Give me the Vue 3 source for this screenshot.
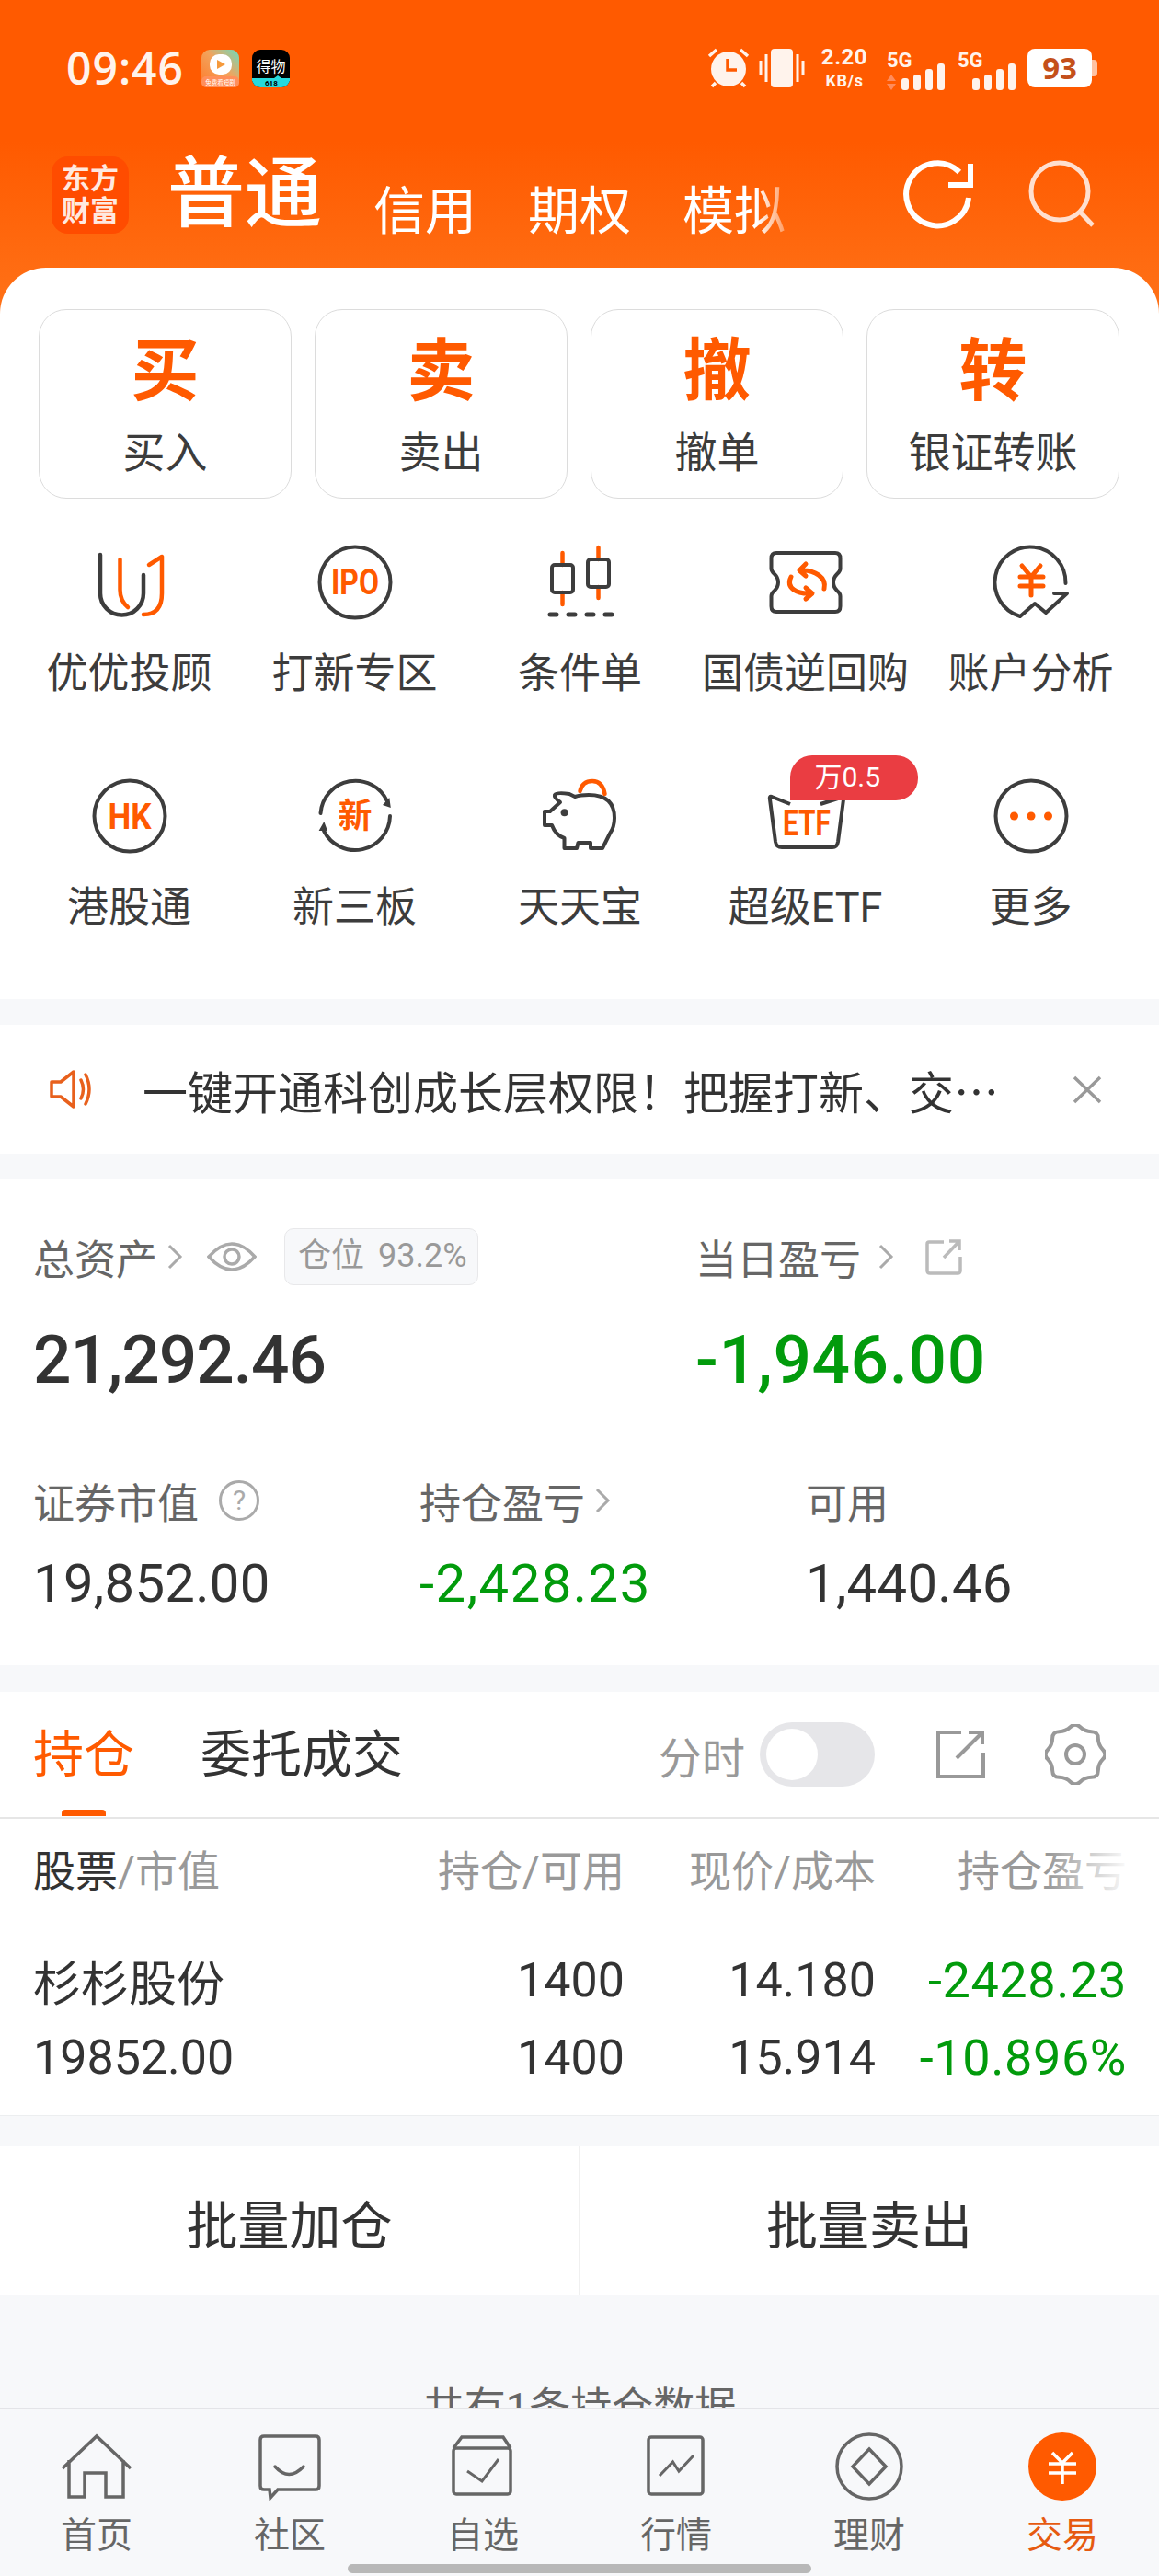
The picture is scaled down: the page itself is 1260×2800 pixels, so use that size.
<template>
  <div class="app">
    <div class="main">
      <header class="hero">
        <div class="status">
          <span class="time">09:46</span>
          <svg class="app-icon first" viewBox="0 0 41 41">
            <defs>
              <linearGradient id="shortPlay" x1="0" y1="1" x2="1" y2="0">
                <stop offset="0" stop-color="#ff7a2a" />
                <stop offset="0.55" stop-color="#f2a35c" />
                <stop offset="1" stop-color="#6fdcbc" />
              </linearGradient>
            </defs>
            <rect width="41" height="41" rx="9" fill="url(#shortPlay)" />
            <rect y="29" width="41" height="12" rx="5" fill="#ff8f5a" />
            <rect x="9" y="5" width="24" height="22" rx="10" fill="#fff" />
            <path d="M17 11 L26 16 L17 21Z" fill="#f59a3c" />
            <text x="20.5" y="37.5" text-anchor="middle" class="tiny">免费看短剧</text>
          </svg>
          <svg class="app-icon" viewBox="0 0 41 41">
            <rect width="41" height="41" rx="9" fill="#000" />
            <path d="M0 32 H41 V32 A9 9 0 0 1 32 41 H9 A9 9 0 0 1 0 32Z M0 31 H24 L28 28 L32 31 H41 V34 H0Z" fill="#26d9dd" />
            <text x="20.5" y="24" text-anchor="middle" class="dewu">得物</text>
            <text x="14" y="39" class="tiny-dark">618</text>
          </svg>

          <svg class="alarm" viewBox="0 0 46 46">
            <circle cx="23" cy="24" r="19" fill="#fff3ec" />
            <path d="M2 10 L10 3 M36 3 L44 10 M5 43 L9 39 M41 43 L37 39" stroke="#fff3ec" stroke-width="3.5" fill="none" />
            <path d="M22 13 V25 H32" stroke="#ff5a00" stroke-width="3.5" fill="none" />
          </svg>
          <svg class="vibrate" viewBox="0 0 50 44">
            <rect x="13" y="1" width="24" height="42" rx="4" fill="#fff3ec" />
            <path d="M2 14 V30 M8 7 V37 M42 7 V37 M48 14 V30" stroke="#fff3ec" stroke-width="3" fill="none" />
          </svg>
          <div class="speed">
            <span class="speed-num">2.20</span>
            <span class="speed-unit">KB/s</span>
          </div>
          <svg class="signal" viewBox="0 -6 63 50">
            <text x="0" y="18" class="five-g">5G</text>
            <path d="M5 26 L10 33 H0Z M0 36 H10 L5 43Z" fill="#ff8c5c" />
            <rect x="16" y="30" width="8" height="13" rx="3" fill="#fff3ec" />
            <rect x="29" y="26" width="8" height="17" rx="3" fill="#fff3ec" />
            <rect x="42" y="20" width="8" height="23" rx="3" fill="#fff3ec" />
            <rect x="55" y="14" width="8" height="29" rx="3" fill="#fff3ec" />
          </svg>
          <svg class="signal second" viewBox="0 -6 63 50">
            <text x="0" y="18" class="five-g">5G</text>
            <rect x="16" y="30" width="8" height="13" rx="3" fill="#fff3ec" />
            <rect x="29" y="26" width="8" height="17" rx="3" fill="#fff3ec" />
            <rect x="42" y="20" width="8" height="23" rx="3" fill="#fff3ec" />
            <rect x="55" y="14" width="8" height="29" rx="3" fill="#fff3ec" />
          </svg>
          <div class="battery"><span>93</span></div>
        </div>

        <div class="titlebar">
          <div class="logo">东方<br>财富</div>
          <span class="tab-main">普通</span>
          <div class="tabs">
            <span>信用</span>
            <span>期权</span>
            <span>模拟</span>
          </div>
          <div class="title-actions">
            <svg width="80" height="80" viewBox="0 0 80 80" fill="none" stroke="#fff" stroke-width="6">
              <path d="M72 43 A34 34 0 1 1 62 15" />
              <path d="M74 6 V29 H50" />
            </svg>
            <svg width="80" height="80" viewBox="0 0 80 80" fill="none" stroke="#ffdfcf" stroke-width="5">
              <circle cx="37" cy="36" r="31" />
              <path d="M59 58 L73 73" />
            </svg>
          </div>
        </div>
      </header>

      <section class="card">
        <div class="actions">
          <div v-for="a in actions" :key="a.big" class="action">
            <span class="action-big">{{ a.big }}</span>
            <span class="action-label">{{ a.label }}</span>
          </div>
        </div>

        <div class="grid">
          <div class="cell">
            <svg class="g-icon" viewBox="0 0 100 100" fill="none" stroke-width="4.5" stroke-linecap="round" stroke-linejoin="round">
              <path d="M18 20 V62 A23.5 23.5 0 0 0 65 62 V42" stroke="#3d3d3d" />
              <path d="M39.5 25 V58 Q39.5 70 48 77" stroke="#ff5a00" />
              <path d="M71 31 L85 22 V62 Q85 85 65 85" stroke="#ff5a00" />
            </svg>
            <span class="cell-label">优优投顾</span>
          </div>
          <div class="cell">
            <svg class="g-icon" viewBox="0 0 100 100" fill="none">
              <circle cx="50" cy="50" r="38.5" stroke="#3d3d3d" stroke-width="4" />
              <text x="50" y="63" text-anchor="middle" textLength="52" lengthAdjust="spacingAndGlyphs" class="g-text">IPO</text>
            </svg>
            <span class="cell-label">打新专区</span>
          </div>
          <div class="cell">
            <svg class="g-icon" viewBox="0 0 100 100" fill="none" stroke-linecap="round">
              <path d="M30.5 18 V31 M30.5 61 V74 M69.5 12 V25 M69.5 55 V67" stroke="#ff5a00" stroke-width="4.5" />
              <rect x="19" y="31" width="23" height="30" rx="3" stroke="#3d3d3d" stroke-width="4" />
              <rect x="58" y="25" width="23" height="30" rx="3" stroke="#3d3d3d" stroke-width="4" />
              <path d="M17 85 H24 M37 85 H44 M57 85 H64 M77 85 H84" stroke="#3d3d3d" stroke-width="5" />
            </svg>
            <span class="cell-label">条件单</span>
          </div>
          <div class="cell">
            <svg class="g-icon" viewBox="0 0 100 100" fill="none" stroke-linecap="round" stroke-linejoin="round">
              <path d="M18 18 H82 Q87.5 18 87.5 24 V35 Q87.5 38 84 41 Q80 45 80 50 Q80 55 84 59 Q87.5 62 87.5 65 V76 Q87.5 82 82 82 H18 Q12.5 82 12.5 76 V65 Q12.5 62 16 59 Q20 55 20 50 Q20 45 16 41 Q12.5 38 12.5 35 V24 Q12.5 18 18 18Z" stroke="#3d3d3d" stroke-width="4" />
              <path d="M70 57 C73 45 60 36 44 37 M50 30 L43 37 L50 43 M34 44 C28 56 40 63 56 62 M50 56 L57 62 L50 68" stroke="#ff5a00" stroke-width="5" />
            </svg>
            <span class="cell-label">国债逆回购</span>
          </div>
          <div class="cell">
            <svg class="g-icon" viewBox="0 0 100 100" fill="none" stroke-linecap="round" stroke-linejoin="round">
              <path d="M87.5 51 A38.5 38.5 0 1 0 38 87 L54 73 L66 83 L89 62 H75" stroke="#3d3d3d" stroke-width="4" />
              <path d="M40 32 L50 44 L60 32 M38 44 H63 M38 54 H63 M50 44 V64" stroke="#ff5a00" stroke-width="5" />
            </svg>
            <span class="cell-label">账户分析</span>
          </div>

          <div class="cell">
            <svg class="g-icon" viewBox="0 0 100 100" fill="none">
              <circle cx="50" cy="50" r="38.5" stroke="#3d3d3d" stroke-width="4" />
              <text x="50" y="64" text-anchor="middle" textLength="47" lengthAdjust="spacingAndGlyphs" class="g-text">HK</text>
            </svg>
            <span class="cell-label">港股通</span>
          </div>
          <div class="cell">
            <svg class="g-icon" viewBox="0 0 100 100" fill="none">
              <path d="M12.5 47 A38 38 0 0 1 85 34 M88 50 A38 38 0 0 1 16 66" stroke="#3d3d3d" stroke-width="4" stroke-linecap="round" />
              <path d="M87.3 30 L88.8 41 L80 38Z M10.6 66 L16.3 56 L20 66Z" fill="#3d3d3d" />
              <text x="50" y="63" text-anchor="middle" class="g-cjk">新</text>
            </svg>
            <span class="cell-label">新三板</span>
          </div>
          <div class="cell">
            <svg class="g-icon" viewBox="0 0 100 100" fill="none" stroke-linejoin="round">
              <path d="M49.5 23 Q52 12 63 12 Q74 12 76.5 26" stroke="#ff5a00" stroke-width="4.5" stroke-linecap="round" />
              <path d="M22 27 Q24 24 38 26 L44 29 Q50 27 59 27 Q87 27 87 52 Q87 62 82 69 L74 85 H61 V79 H47.5 L46 85 H32.5 V74 Q23 71 19 60 H11 V45 H17 L28 35 Q21 30 22 27Z" stroke="#3d3d3d" stroke-width="4" />
              <circle cx="32.6" cy="46.3" r="4" fill="#3d3d3d" />
            </svg>
            <span class="cell-label">天天宝</span>
          </div>
          <div class="cell">
            <div class="icon-wrap">
              <svg class="g-icon" viewBox="0 0 100 100" fill="none" stroke-linejoin="round">
                <path d="M33 37 L13 29 Q10 28 11 32 L17 78 Q18 84 24 84 H79 Q84 84 85 78 L91 32 Q91 28 88 30 L66 37" stroke="#3d3d3d" stroke-width="4" />
                <text x="51" y="71" text-anchor="middle" textLength="52" lengthAdjust="spacingAndGlyphs" class="g-text">ETF</text>
              </svg>
              <span class="badge">万0.5</span>
            </div>
            <span class="cell-label">超级ETF</span>
          </div>
          <div class="cell">
            <svg class="g-icon" viewBox="0 0 100 100" fill="none">
              <circle cx="50" cy="50" r="38.5" stroke="#3d3d3d" stroke-width="4" />
              <circle cx="31.5" cy="50" r="4.5" fill="#ff5a00" />
              <circle cx="50" cy="50" r="4.5" fill="#ff5a00" />
              <circle cx="68.5" cy="50" r="4.5" fill="#ff5a00" />
            </svg>
            <span class="cell-label">更多</span>
          </div>
        </div>
      </section>

      <section class="notice">
        <svg class="speaker" width="46" height="42" viewBox="0 0 46 42" fill="none" stroke="#e8601c" stroke-width="3.5" stroke-linejoin="round">
          <path d="M2 13 H12 L26 2 V40 L12 29 H2Z" />
          <path d="M34 11 Q39 21 34 31 M39 5 Q47 21 39 37" stroke-linecap="round" />
        </svg>
        <span class="notice-text">一键开通科创成长层权限！把握打新、交…</span>
        <svg class="close" width="32" height="32" viewBox="0 0 32 32" stroke="#999" stroke-width="3.5" fill="none">
          <path d="M2 3 L30 30 M30 3 L2 30" />
        </svg>
      </section>

      <section class="assets">
        <div class="assets-top">
          <div class="asset-main">
            <div class="label-row">
              <span>总资产</span>
              <svg class="chev" viewBox="0 0 18 30"><path d="M3 3 L15 15 L3 27" /></svg>
              <svg class="eye" width="54" height="38" viewBox="0 0 54 38" fill="none" stroke="#aaa" stroke-width="3.5">
                <path d="M2 19 Q27 -9 52 19 Q27 47 2 19Z" />
                <circle cx="27" cy="19" r="8" />
              </svg>
              <span class="pill">仓位 <i>93.2%</i></span>
            </div>
            <div class="big">21,292.46</div>
          </div>
          <div class="asset-day">
            <div class="label-row">
              <span>当日盈亏</span>
              <svg class="chev wide" viewBox="0 0 18 30"><path d="M3 3 L15 15 L3 27" /></svg>
              <svg class="ext" width="40" height="40" viewBox="0 0 40 40" fill="none" stroke="#bbb" stroke-width="3.5">
                <path d="M20 4 H4 Q2 4 2 6 V35 Q2 38 5 38 H35 Q38 38 38 35 V20" />
                <path d="M20 21 L37 3 M26 3 H37 V13" />
              </svg>
            </div>
            <div class="big green">-1,946.00</div>
          </div>
        </div>

        <div class="assets-sub">
          <div>
            <div class="label-row">
              <span>证券市值</span>
              <span class="help">?</span>
            </div>
            <div class="val">19,852.00</div>
          </div>
          <div>
            <div class="label-row">
              <span>持仓盈亏</span>
              <svg class="chev" viewBox="0 0 18 30"><path d="M3 3 L15 15 L3 27" /></svg>
            </div>
            <div class="val green">-2,428.23</div>
          </div>
          <div>
            <div class="label-row"><span>可用</span></div>
            <div class="val">1,440.46</div>
          </div>
        </div>
      </section>

      <section class="positions">
        <div class="pos-tabs">
          <span class="pos-tab active">持仓</span>
          <span class="pos-tab">委托成交</span>
          <div class="pos-tools">
            <span class="fen">分时</span>
            <span class="toggle"><i></i></span>
            <svg class="share" width="54" height="54" viewBox="0 0 54 54" fill="none" stroke="#999" stroke-width="4">
              <path d="M28 3 H3 V51 H52 V25" />
              <path d="M23 31 L51 3 M36 3 H51 V16" />
            </svg>
            <svg width="66" height="66" viewBox="0 0 66 66" fill="none" stroke="#999" stroke-width="4">
              <path :d="gearPath" />
              <circle cx="33" cy="33" r="10" />
            </svg>
          </div>
        </div>

        <div class="pos-head pos-grid">
          <span class="pos-name"><b>股票</b>/市值</span>
          <span>持仓/可用</span>
          <span>现价/成本</span>
          <span class="fade-cell">持仓盈亏</span>
        </div>

        <div class="pos-body">
          <div class="pos-grid pos-row">
            <span class="pos-name">杉杉股份</span>
            <span>1400</span>
            <span>14.180</span>
            <span class="green">-2428.23</span>
          </div>
          <div class="pos-grid pos-row">
            <span class="pos-name">19852.00</span>
            <span>1400</span>
            <span>15.914</span>
            <span class="green">-10.896%</span>
          </div>
        </div>
      </section>

      <div class="batch">
        <span>批量加仓</span>
        <span>批量卖出</span>
      </div>

      <div class="count">共有1条持仓数据</div>
    </div>

    <nav class="nav">
      <div class="nav-item">
        <svg viewBox="0 0 90 90" fill="none" stroke="#666" stroke-width="3.5">
          <path d="M8 47 L45 12 L82 47 M15 38 V78 H32 V52 H55 V78 H74 V38" />
        </svg>
        <span>首页</span>
      </div>
      <div class="nav-item">
        <svg viewBox="0 0 90 90" fill="none" stroke="#666" stroke-width="3.5">
          <path d="M17 12 H73 Q77 12 77 16 V66 Q77 70 73 70 H32 L24 79 L23 70 H17 Q13 70 13 66 V16 Q13 12 17 12Z" />
          <path d="M29 45 Q44 62 60 45" stroke-linecap="round" />
        </svg>
        <span>社区</span>
      </div>
      <div class="nav-item">
        <svg viewBox="0 0 90 90" fill="none" stroke="#666" stroke-width="3.5">
          <path d="M13 25 L22 13 H67 L75 25" />
          <rect x="13" y="25" width="62" height="50" rx="3" />
          <path d="M28 50 L44 61 L62 37" stroke-width="3" />
        </svg>
        <span>自选</span>
      </div>
      <div class="nav-item">
        <svg viewBox="0 0 90 90" fill="none" stroke="#666" stroke-width="3.5">
          <rect x="15" y="13" width="59" height="62" rx="3" />
          <path d="M27 55 L41.5 40 L48 50 L64 33" stroke-width="3" />
        </svg>
        <span>行情</span>
      </div>
      <div class="nav-item">
        <svg viewBox="0 0 90 90" fill="none" stroke="#666" stroke-width="3.5">
          <circle cx="45" cy="45" r="35" />
          <path d="M45 26 L63 45 L45 64 L27 45Z" />
        </svg>
        <span>理财</span>
      </div>
      <div class="nav-item active">
        <svg viewBox="0 0 90 90" fill="none">
          <circle cx="45" cy="45" r="37" fill="#ff5a00" />
          <path d="M34 30 L45 41 L56 30 M30 42 H60 M30 52 H60 M45 41 V64" stroke="#fff" stroke-width="3.5" />
        </svg>
        <span>交易</span>
      </div>
      <i class="home-bar"></i>
    </nav>
  </div>
</template>

<script setup>
const actions = [
  { big: '买', label: '买入' },
  { big: '卖', label: '卖出' },
  { big: '撤', label: '撤单' },
  { big: '转', label: '银证转账' }
]

// wavy eight-tooth outline for the settings gear
const gearPts = []
for (let i = 0; i < 16; i++) {
  const r = i % 2 ? 27 : 35
  const a = (Math.PI / 8) * i - Math.PI / 2
  gearPts.push([33 + r * Math.cos(a), 33 + r * Math.sin(a)])
}
const mid = (p, q) => [(p[0] + q[0]) / 2, (p[1] + q[1]) / 2]
const start = mid(gearPts[15], gearPts[0])
let gearPath = `M${start[0]} ${start[1]}`
gearPts.forEach((p, i) => {
  const m = mid(p, gearPts[(i + 1) % 16])
  gearPath += ` Q${p[0]} ${p[1]} ${m[0]} ${m[1]}`
})
gearPath += 'Z'
</script>

<style scoped>
.app {
  width: 1260px;
  height: 2800px;
  display: flex;
  flex-direction: column;
  overflow: hidden;
  background: #f7f8fa;
  color: #333;
  font-family: Roboto, "Noto Sans CJK SC", sans-serif;
}

.main {
  flex: 1;
  min-height: 0;
  overflow: hidden;
}

.hero {
  height: 341px;
  box-sizing: border-box;
  padding-top: 52px;
  background: linear-gradient(180deg, #ff5a00 0%, #ff5a00 45%, #ff7218 100%);
}

.status {
  display: flex;
  align-items: center;
  height: 44px;
  padding-left: 72px;
  color: #fff3ec;
}

.time {
  width: 147px;
  font-family: "Open Sans", sans-serif;
  font-size: 48px;
  font-weight: 600;
  line-height: 44px;
  letter-spacing: 1px;
}

.app-icon {
  width: 41px;
  height: 41px;
  margin-right: 14px;
}

.tiny {
  font-family: "Noto Sans CJK SC", sans-serif;
  font-size: 6.5px;
  fill: #fff;
}

.tiny-dark {
  font-family: Roboto, sans-serif;
  font-size: 8px;
  font-weight: 700;
  fill: #000;
}

.dewu {
  font-family: "Noto Sans CJK SC", sans-serif;
  font-size: 16px;
  fill: #fff;
}

.alarm {
  width: 46px;
  height: 46px;
  margin-left: 440px;
}

.vibrate {
  width: 50px;
  height: 44px;
  margin-left: 10px;
}

.speed {
  display: flex;
  flex-direction: column;
  align-items: center;
  width: 54px;
  margin-left: 16px;
  font-family: Roboto, sans-serif;
  font-weight: 700;
}

.speed-num {
  font-size: 24px;
  line-height: 27px;
  letter-spacing: 0.5px;
}

.speed-unit {
  font-size: 18px;
  line-height: 23px;
  letter-spacing: 0.5px;
}

.signal {
  width: 63px;
  height: 50px;
  margin-left: 19px;
}

.signal.second {
  margin-left: 14px;
}

.five-g {
  font-family: Roboto, sans-serif;
  font-size: 22px;
  font-weight: 700;
  fill: #fff3ec;
}

.battery {
  position: relative;
  width: 70px;
  height: 42px;
  margin-left: 13px;
  border-radius: 8px;
  background: #fff;
  display: flex;
  align-items: center;
  justify-content: center;
}

.battery::after {
  content: "";
  position: absolute;
  right: -6px;
  top: 12px;
  width: 6px;
  height: 18px;
  border-radius: 0 4px 4px 0;
  background: #ffc2a2;
}

.battery span {
  font-family: "Open Sans", sans-serif;
  font-size: 33px;
  font-weight: 700;
  line-height: 42px;
  color: #c4501a;
}

.titlebar {
  display: flex;
  align-items: flex-end;
  height: 84px;
  margin-top: 74px;
  padding: 0 65px 0 56px;
  color: #fff;
}

.logo {
  width: 84px;
  height: 84px;
  box-sizing: border-box;
  padding-top: 7px;
  border-radius: 18px;
  background: #ff4c00;
  color: #ffe9e0;
  font-size: 31px;
  font-weight: 700;
  line-height: 35px;
  text-align: center;
}

.tab-main {
  margin-left: 42px;
  font-size: 84px;
  font-weight: 500;
  line-height: 84px;
}

.tabs {
  display: flex;
  gap: 56px;
  margin-left: 56px;
  font-size: 56px;
  line-height: 60px;
  margin-bottom: -6px;
  -webkit-mask-image: linear-gradient(to right, #000 93%, rgba(0, 0, 0, 0.35) 100%);
  mask-image: linear-gradient(to right, #000 93%, rgba(0, 0, 0, 0.35) 100%);
}

.title-actions {
  display: flex;
  gap: 54px;
  margin-left: auto;
  align-self: center;
}

.card {
  margin-top: -50px;
  padding: 45px 0 69px;
  border-radius: 50px 50px 0 0;
  background: #fff;
}

.actions {
  display: grid;
  grid-template-columns: repeat(4, 275px);
  gap: 25px;
  padding: 0 42px;
}

.action {
  height: 206px;
  box-sizing: border-box;
  border: 1.5px solid #dcdcdc;
  border-radius: 30px;
  display: flex;
  flex-direction: column;
  align-items: center;
  padding-top: 25px;
}

.action-big {
  color: #ff5a00;
  font-size: 74px;
  font-weight: 700;
  line-height: 84px;
}

.action-label {
  margin-top: 16px;
  font-size: 46px;
  line-height: 60px;
  color: #3c3c3c;
}

.grid {
  display: grid;
  grid-template-columns: repeat(5, 245px);
  row-gap: 74px;
  margin-top: 41px;
  padding: 0 18px;
}

.cell {
  display: flex;
  flex-direction: column;
  align-items: center;
}

.icon-wrap {
  position: relative;
  width: 100px;
  height: 100px;
}

.g-icon {
  display: block;
  width: 100px;
  height: 100px;
}

.cell-label {
  margin-top: 20px;
  font-size: 45px;
  line-height: 60px;
  color: #3c3c3c;
  white-space: nowrap;
}

.g-text {
  font-family: Roboto, sans-serif;
  font-size: 38px;
  font-weight: 700;
  fill: #ff5a00;
}

.g-cjk {
  font-family: "Noto Sans CJK SC", sans-serif;
  font-size: 37px;
  font-weight: 700;
  fill: #ff5a00;
}

.badge {
  position: absolute;
  left: 33px;
  top: -16px;
  width: 139px;
  height: 49px;
  box-sizing: border-box;
  padding-left: 27px;
  border-radius: 24px 24px 24px 0;
  background: #ea3d42;
  color: #fff;
  font-size: 30px;
  line-height: 48px;
  white-space: nowrap;
}

.notice {
  display: flex;
  align-items: center;
  height: 140px;
  margin-top: 28px;
  padding: 0 62px 0 54px;
  background: #fff;
}

.notice-text {
  margin-left: 55px;
  font-family: "Noto Sans CJK SC", sans-serif;
  font-size: 49px;
  color: #333;
  white-space: nowrap;
}

.close {
  margin-left: auto;
}

.assets {
  height: 528px;
  box-sizing: border-box;
  margin-top: 28px;
  padding: 54px 0 0 36px;
  background: #fff;
}

.assets-top {
  display: grid;
  grid-template-columns: 720px 1fr;
}

.label-row {
  display: flex;
  align-items: center;
  height: 60px;
  font-size: 45px;
  color: #666;
  white-space: nowrap;
}

.chev {
  width: 18px;
  height: 30px;
  margin-left: 10px;
  fill: none;
  stroke: #aaa;
  stroke-width: 3;
}

.chev.wide {
  margin-left: 18px;
}

.eye {
  margin-left: 26px;
}

.pill {
  height: 62px;
  box-sizing: border-box;
  margin-left: 30px;
  padding: 0 11px 0 14px;
  border: 1.5px solid #e8e8ea;
  border-radius: 10px;
  background: #f7f8fa;
  color: #999;
  font-size: 36px;
  line-height: 58px;
}

.pill i {
  margin-left: 6px;
  font-style: normal;
}

.ext {
  margin-left: 34px;
}

.big {
  margin-top: 42px;
  font-size: 73px;
  font-weight: 500;
  line-height: 80px;
  letter-spacing: -1px;
}

.big.green {
  letter-spacing: 0.6px;
}

.green {
  color: #029b0c;
}

.assets-sub {
  display: grid;
  grid-template-columns: 420px 420px 1fr;
  margin-top: 83px;
}

.help {
  width: 44px;
  height: 44px;
  box-sizing: border-box;
  margin-left: 22px;
  border: 3.5px solid #aaa;
  border-radius: 50%;
  color: #aaa;
  font-size: 30px;
  line-height: 37px;
  text-align: center;
}

.val {
  margin-top: 24px;
  font-size: 58px;
  line-height: 72px;
  letter-spacing: 0.3px;
}

.val.green {
  letter-spacing: 1.5px;
}

.positions {
  margin-top: 29px;
  background: #fff;
  border-bottom: 1.5px solid #eceef0;
}

.pos-tabs {
  display: flex;
  align-items: center;
  height: 138px;
  box-sizing: border-box;
  padding: 0 58px 0 36px;
  border-bottom: 2px solid #e6e6e6;
}

.pos-tab {
  position: relative;
  margin-right: 72px;
  font-size: 55px;
  line-height: 74px;
  color: #333;
}

.pos-tab.active {
  color: #ff5a00;
}

.pos-tab.active::after {
  content: "";
  position: absolute;
  left: 31px;
  bottom: -30px;
  width: 48px;
  height: 7px;
  border-radius: 4px 4px 0 0;
  background: #ff5a00;
}

.pos-tools {
  display: flex;
  align-items: center;
  margin-left: auto;
}

.fen {
  font-size: 47px;
  color: #999;
}

.toggle {
  display: block;
  width: 125px;
  height: 70px;
  box-sizing: border-box;
  margin-left: 16px;
  padding: 7px;
  border-radius: 35px;
  background: #e6e6e9;
}

.toggle i {
  display: block;
  width: 56px;
  height: 56px;
  border-radius: 50%;
  background: #fff;
}

.share {
  margin-left: 66px;
}

.pos-tools svg:last-child {
  margin-left: 65px;
}

.pos-grid {
  display: grid;
  grid-template-columns: 1fr 273px 273px 273px;
  padding: 0 35px 0 36px;
  text-align: right;
  align-items: center;
  white-space: nowrap;
}

.pos-head {
  height: 112px;
  box-sizing: border-box;
  padding-bottom: 6px;
  font-size: 46px;
  color: #999;
}

.pos-head b {
  font-weight: 400;
  color: #333;
}

.pos-name {
  text-align: left;
}

.fade-cell {
  position: relative;
}

.fade-cell::after {
  content: "";
  position: absolute;
  right: -4px;
  top: 0;
  bottom: 0;
  width: 90px;
  background: linear-gradient(to right, rgba(255, 255, 255, 0), #fff);
}

.pos-body {
  padding: 21px 0 21px;
}

.pos-row {
  height: 84px;
  font-size: 52px;
  color: #333;
}

.pos-row .green {
  font-size: 54px;
  letter-spacing: 0.6px;
  color: #029b0c;
}

.batch {
  display: grid;
  grid-template-columns: 1fr 1fr;
  height: 162px;
  margin-top: 33px;
  background: #fff;
  font-size: 56px;
  color: #333;
}

.batch span {
  display: flex;
  align-items: center;
  justify-content: center;
}

.batch span:first-child {
  border-right: 1px solid #f0f0f0;
}

.count {
  margin-top: 93px;
  font-size: 45px;
  line-height: 60px;
  color: #666;
  text-align: center;
}

.nav {
  position: relative;
  display: grid;
  grid-template-columns: repeat(6, 210px);
  height: 183px;
  box-sizing: border-box;
  padding-top: 17px;
  border-top: 2px solid #e4e4e8;
  background: #f7f8fa;
}

.nav-item {
  display: flex;
  flex-direction: column;
  align-items: center;
  color: #666;
  font-size: 39px;
  line-height: 50px;
}

.nav-item svg {
  display: block;
  width: 90px;
  height: 90px;
}

.nav-item span {
  margin-top: 5px;
}

.nav-item.active {
  color: #e65a10;
}

.home-bar {
  position: absolute;
  left: 378px;
  bottom: 3px;
  width: 504px;
  height: 10px;
  border-radius: 5px;
  background: #b8b8b8;
}
</style>
